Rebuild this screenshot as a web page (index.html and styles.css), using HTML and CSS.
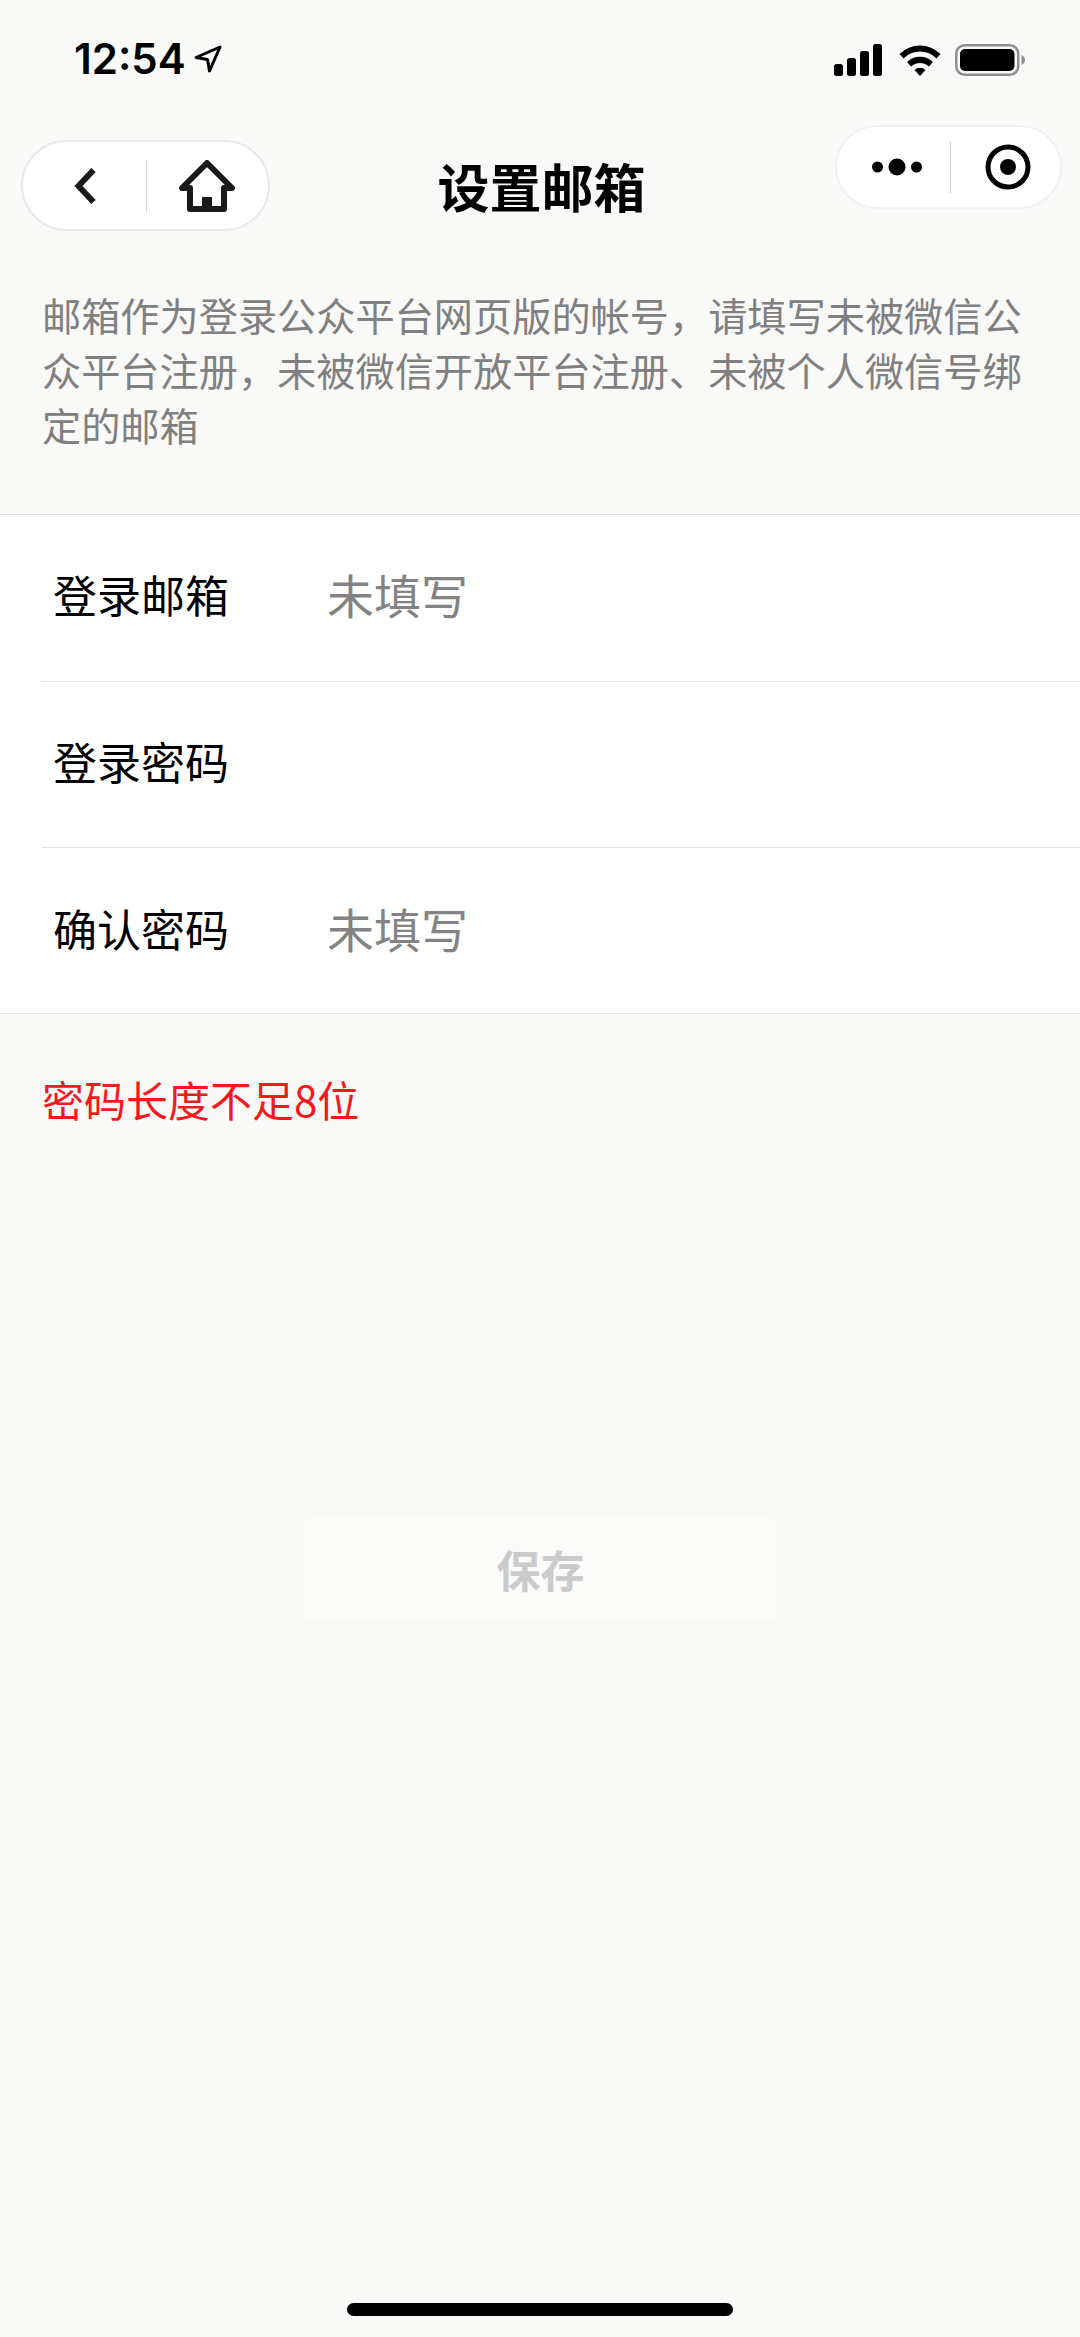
FILE: index.html
```html
<!DOCTYPE html>
<html lang="zh-CN">
<head>
<meta charset="utf-8">
<title>设置邮箱</title>
<link rel="stylesheet" href="styles.css">
</head>
<body>
<div class="page">
  <div class="status">
    <div class="status-left">
      <span class="time">12:54</span>
      <svg class="loc" width="28" height="28" viewBox="0 0 28 28"><path d="M26 2 L2 12.500 L13.500 14.500 L15.500 26 Z" fill="none" stroke="#000" stroke-width="3" stroke-linejoin="round"/></svg>
    </div>
    <div class="status-right">
      <svg width="48" height="32" viewBox="0 0 48 32"><rect x="0" y="20" width="9" height="12" rx="2.500"/><rect x="13" y="14" width="9" height="18" rx="2.500"/><rect x="26" y="7" width="9" height="25" rx="2.500"/><rect x="39" y="0" width="9" height="32" rx="2.500"/></svg>
      <svg width="42" height="32" viewBox="0 0 42 32"><path d="M0.500 10 A29 29 0 0 1 41.500 10 L37.500 14.500 A23 23 0 0 0 4.500 14.500 Z"/><path d="M8 18 A18.500 18.500 0 0 1 34 18 L30 22.500 A13 13 0 0 0 12 22.500 Z"/><path d="M15.500 26 A8 8 0 0 1 26.500 26 L21 32 Z"/></svg>
      <svg class="battery" width="70" height="32" viewBox="0 0 70 32"><rect x="1.250" y="1.250" width="62" height="29.500" rx="8.500" fill="none" stroke="#8e8e8e" stroke-width="2.500"/><rect x="5" y="5" width="54.500" height="22" rx="5"/><path d="M66.500 11 C69 12 70 14 70 16 C70 18 69 20 66.500 21 Z" fill="#8e8e8e"/></svg>
    </div>
  </div>
  <div class="nav">
    <div class="capsule capsule-left">
      <span class="cap-cell cell-back"><svg width="24" height="38" viewBox="0 0 24 38"><path d="M20.500 3 L5.500 19 L20.500 35" fill="none" stroke="#1a1a1a" stroke-width="6"/></svg></span>
      <span class="cap-sep"></span>
      <span class="cap-cell cell-home"><svg width="56" height="52" viewBox="0 0 56 52"><path d="M3 28 L28 3 L53 28 H45 V49 H11 V28 Z" fill="none" stroke="#1a1a1a" stroke-width="6" stroke-linejoin="round"/><rect x="23" y="37" width="10" height="12" fill="#1a1a1a"/></svg></span>
    </div>
    <h1 class="title">设置邮箱</h1>
    <div class="capsule capsule-right">
      <span class="cap-cell cell-more"><svg width="50" height="18" viewBox="0 0 50 18"><circle cx="5.500" cy="9" r="5.500"/><circle cx="25" cy="9" r="8.500"/><circle cx="44.500" cy="9" r="5.500"/></svg></span>
      <span class="cap-sep"></span>
      <span class="cap-cell cell-close"><svg width="46" height="46" viewBox="0 0 46 46"><circle cx="23" cy="23" r="20" fill="none" stroke="#000" stroke-width="5"/><circle cx="23" cy="23" r="8"/></svg></span>
    </div>
  </div>
  <p class="desc">邮箱作为登录公众平台网页版的帐号，请填写未被微信公众平台注册，未被微信开放平台注册、未被个人微信号绑定的邮箱</p>
  <div class="form">
    <div class="row"><span class="label">登录邮箱</span><span class="hint">未填写</span></div>
    <div class="row"><span class="label">登录密码</span><span class="hint"></span></div>
    <div class="row"><span class="label">确认密码</span><span class="hint">未填写</span></div>
  </div>
  <p class="error">密码长度不足8位</p>
  <button class="save" type="button">保存</button>
  <div class="spacer"></div>
  <div class="home-bar"></div>
</div>
</body>
</html>
```
FILE: styles.css
```css
* { box-sizing: border-box; }
html, body { margin: 0; padding: 0; }
body {
  background: #f9f9f8;
  font-family: "Noto Sans CJK SC", "Noto Sans", sans-serif;
  color: #000;
}
.page {
  width: 1080px;
  height: 2337px;
  display: flex;
  flex-direction: column;
  overflow: hidden;
}
.status {
  height: 118px;
  padding: 42px 55px 0 74px;
  display: flex;
  justify-content: space-between;
  align-items: flex-start;
  flex-shrink: 0;
}
.status-left { display: flex; align-items: center; gap: 8px; height: 34px; }
.time {
  font-family: Inter, Roboto, sans-serif;
  font-size: 42px;
  font-weight: 600;
  line-height: 34px;
  letter-spacing: 0;
}
.status-right { display: flex; align-items: center; gap: 17px; height: 34px; margin-top: 1px; }
.battery { margin-left: -3px; }
.nav {
  height: 125px;
  display: grid;
  grid-template-columns: 1fr auto 1fr;
  padding: 0 18px 0 21px;
  flex-shrink: 0;
}
.capsule {
  display: flex;
  align-items: center;
  background: #fff;
  border: 2px solid #e9e9e9;
  border-radius: 46px;
}
.capsule-left { width: 249px; height: 91px; margin-top: 22px; justify-self: start; }
.capsule-right { width: 227px; height: 84px; margin-top: 7px; justify-self: end; border-color: #f1f1f1; }
.cap-cell { display: flex; align-items: center; justify-content: center; }
.cap-cell svg { display: block; }
.cell-back { width: 123px; }
.cell-home { width: 121px; padding-right: 2px; }
.cell-more { width: 113px; padding-left: 6px; }
.cell-close { width: 109px; padding-left: 4px; }
.cell-more svg { fill: #000; }
.cap-sep { width: 1px; height: 52px; background: #cfcfcf; flex-shrink: 0; }
.title {
  margin: 35px 0 0;
  font-size: 52px;
  font-weight: 700;
  line-height: 66px;
  height: 66px;
}
.desc {
  margin: 0;
  padding: 44px 40px 0 42px;
  font-size: 39.200px;
  line-height: 55px;
  color: #808080;
  height: 271px;
  flex-shrink: 0;
}
.form {
  background: #fff;
  border-top: 1px solid #dedede;
  border-bottom: 1px solid #e3e3e3;
  flex-shrink: 0;
  padding-left: 42px;
  height: 500px;
}
.row {
  height: 166.500px;
  display: flex;
  align-items: center;
  padding: 0 0 7px 11px;
  border-bottom: 1px solid #e3e3e3;
}
.row:last-child { border-bottom: 0; }
.label {
  width: 274px;
  font-size: 44px;
  line-height: 60px;
  flex-shrink: 0;
}
.hint {
  font-size: 47px;
  line-height: 60px;
  color: #838383;
}
.error {
  margin: 0;
  padding: 57px 42px 0;
  font-size: 42px;
  line-height: 56px;
  color: #f5181c;
  flex-shrink: 0;
}
.save {
  margin: 390px 0 0 303px;
  width: 475px;
  height: 104px;
  background: #fbfbfa;
  border: 0;
  border-radius: 8px;
  color: #cbcbcb;
  font-family: inherit;
  font-size: 44px;
  font-weight: 700;
  line-height: 60px;
  padding: 0;
  flex-shrink: 0;
}
.spacer { flex: 1; }
.home-bar {
  width: 386px;
  height: 13px;
  margin: 0 auto 21px;
  background: #000;
  border-radius: 7px;
  flex-shrink: 0;
}
```
